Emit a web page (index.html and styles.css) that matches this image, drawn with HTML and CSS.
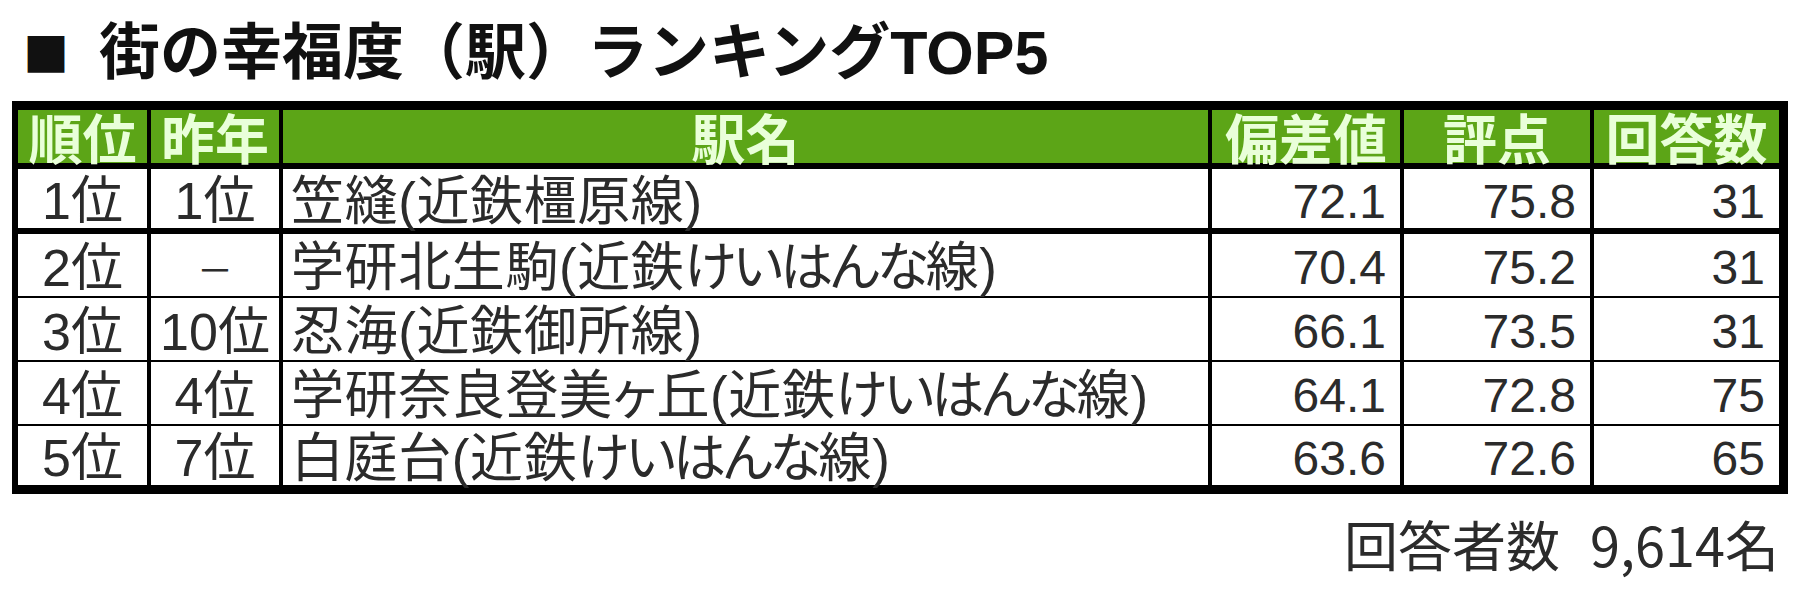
FILE: index.html
```html
<!DOCTYPE html>
<html lang="ja">
<head>
<meta charset="utf-8">
<title>街の幸福度（駅）ランキングTOP5</title>
<link rel="stylesheet" href="styles.css">
</head>
<body>
<div class="page">
  <h1 class="title"><span class="sq">■</span><span class="tt">街の幸福度（駅）ランキング<span class="lat">TOP5</span></span></h1>
  <div class="grid">
    <div class="h c">順位</div>
    <div class="h c">昨年</div>
    <div class="h c">駅名</div>
    <div class="h c">偏差値</div>
    <div class="h c">評点</div>
    <div class="h c">回答数</div>

    <div class="d r1 c k">1位</div>
    <div class="d r1 c k">1位</div>
    <div class="d r1 l">笠縫(近鉄橿原線)</div>
    <div class="d r1 n">72.1</div>
    <div class="d r1 n">75.8</div>
    <div class="d r1 n">31</div>

    <div class="d c k">2位</div>
    <div class="d c k"><span class="dash">－</span></div>
    <div class="d l">学研北生駒(近鉄<span class="kana">けいはんな</span>線)</div>
    <div class="d n">70.4</div>
    <div class="d n">75.2</div>
    <div class="d n">31</div>

    <div class="d c k">3位</div>
    <div class="d c k">10位</div>
    <div class="d l">忍海(近鉄御所線)</div>
    <div class="d n">66.1</div>
    <div class="d n">73.5</div>
    <div class="d n">31</div>

    <div class="d c k">4位</div>
    <div class="d c k">4位</div>
    <div class="d l">学研奈良登美ヶ丘(近鉄<span class="kana">けいはんな</span>線)</div>
    <div class="d n">64.1</div>
    <div class="d n">72.8</div>
    <div class="d n">75</div>

    <div class="d r5 c k">5位</div>
    <div class="d r5 c k">7位</div>
    <div class="d r5 l">白庭台(近鉄<span class="kana">けいはんな</span>線)</div>
    <div class="d r5 n">63.6</div>
    <div class="d r5 n">72.6</div>
    <div class="d r5 n">65</div>
  </div>
  <p class="foot">回答者数<span class="gap"> </span>9,614名</p>
</div>
</body>
</html>
```

FILE: styles.css
```css
html, body {
  margin: 0;
  padding: 0;
  background: #ffffff;
}

.page {
  width: 1800px;
  height: 615px;
  overflow: hidden;
  font-family: "Noto Sans CJK JP", sans-serif;
}

.title {
  margin: 0;
  padding: 0 0 0 23px;
  height: 101px;
  box-sizing: border-box;
  font-size: 61px;
  line-height: 96px;
  font-weight: 700;
  color: #111111;
  white-space: nowrap;
  display: flex;
  align-items: center;
}

.sq {
  font-size: 46px;
  margin-right: 30px;
}

.lat {
  font-family: "Liberation Sans", "Noto Sans CJK JP", sans-serif;
}

.grid {
  margin: 0 0 0 12px;
  width: 1776px;
  box-sizing: border-box;
  display: grid;
  grid-template-columns: 129px 128px 925px 188px 186px 1fr;
  column-gap: 4px;
  row-gap: 2px;
  background: #000000;
  padding: 9px 9px 9px 6px;
}

.h {
  background: #5ca517;
  color: #e9ffd9;
  font-weight: 700;
  font-size: 54px;
  height: 53px;
  line-height: 53px;
  margin-bottom: 4px;
  white-space: nowrap;
}

.d {
  background: #ffffff;
  color: #2b2b2b;
  font-family: "Liberation Sans", "Noto Sans CJK JP", sans-serif;
  font-size: 48px;
  height: 62px;
  box-sizing: border-box;
  padding-top: 6px;
  line-height: 56px;
  white-space: nowrap;
}

.k {
  font-size: 52px;
}

.dash {
  display: inline-block;
  font-family: "Noto Sans CJK JP", sans-serif;
  font-size: 36px;
  vertical-align: 8px;
}

.r1 {
  height: 59px;
  line-height: 53px;
  margin-bottom: 4px;
}

.r5 {
  height: 59px;
  line-height: 53px;
}

.c { text-align: center; }
.l {
  text-align: left;
  padding-left: 8px;
  font-size: 53px;
  letter-spacing: 0.6px;
  font-feature-settings: "palt" 1;
}
.kana {
  letter-spacing: -3px;
}
.n { text-align: right; padding-right: 14px; }

.foot {
  margin: 20px 21px 0 0;
  text-align: right;
  font-size: 54px;
  line-height: 60px;
  color: #2b2b2b;
}

.gap {
  display: inline-block;
  width: 30px;
}
```
